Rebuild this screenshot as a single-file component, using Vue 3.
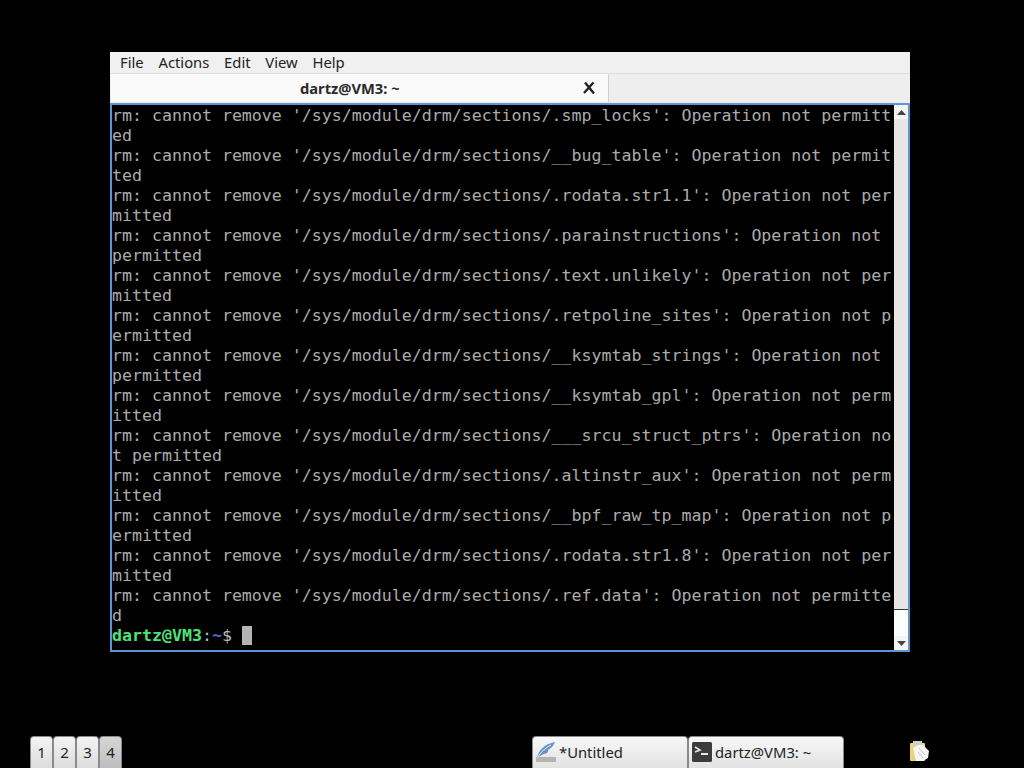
<script setup>
const lines = [
  "rm: cannot remove '/sys/module/drm/sections/.smp_locks': Operation not permitt",
  "ed",
  "rm: cannot remove '/sys/module/drm/sections/__bug_table': Operation not permit",
  "ted",
  "rm: cannot remove '/sys/module/drm/sections/.rodata.str1.1': Operation not per",
  "mitted",
  "rm: cannot remove '/sys/module/drm/sections/.parainstructions': Operation not ",
  "permitted",
  "rm: cannot remove '/sys/module/drm/sections/.text.unlikely': Operation not per",
  "mitted",
  "rm: cannot remove '/sys/module/drm/sections/.retpoline_sites': Operation not p",
  "ermitted",
  "rm: cannot remove '/sys/module/drm/sections/__ksymtab_strings': Operation not ",
  "permitted",
  "rm: cannot remove '/sys/module/drm/sections/__ksymtab_gpl': Operation not perm",
  "itted",
  "rm: cannot remove '/sys/module/drm/sections/___srcu_struct_ptrs': Operation no",
  "t permitted",
  "rm: cannot remove '/sys/module/drm/sections/.altinstr_aux': Operation not perm",
  "itted",
  "rm: cannot remove '/sys/module/drm/sections/__bpf_raw_tp_map': Operation not p",
  "ermitted",
  "rm: cannot remove '/sys/module/drm/sections/.rodata.str1.8': Operation not per",
  "mitted",
  "rm: cannot remove '/sys/module/drm/sections/.ref.data': Operation not permitte",
  "d",
];
const menus = ["File", "Actions", "Edit", "View", "Help"];
const workspaces = ["1", "2", "3", "4"];
</script>

<template>
  <div class="desktop">
    <section class="window">
      <nav class="menubar">
        <span v-for="m in menus" :key="m" class="menu">{{ m }}</span>
      </nav>
      <div class="tabbar">
        <div class="tab">
          <span class="tab-title">dartz@VM3: ~</span>
          <svg class="tab-close" width="14" height="14" viewBox="0 0 14 14">
            <path d="M3 1.5 C6 5 9 9 12 12.5 M11.5 1.5 C9 4 5 9 2 12" stroke="#222" stroke-width="2.4" fill="none" />
          </svg>
        </div>
      </div>
      <div class="terminal">
        <div class="output">
          <div v-for="(l, i) in lines" :key="i" class="line">{{ l }}</div>
          <div class="line prompt"><span class="pu">dartz@VM3</span><span class="pc">:</span><span class="pp">~</span><span class="pc">$ </span><span class="cursor"></span></div>
        </div>
        <div class="scrollbar">
          <div class="sb-btn">
            <svg width="9" height="5" viewBox="0 0 9 5"><path d="M4.5 0 L9 5 L0 5 Z" fill="#444" /></svg>
          </div>
          <div class="sb-thumb"></div>
          <div class="sb-trough"></div>
          <div class="sb-btn">
            <svg width="9" height="5" viewBox="0 0 9 5"><path d="M0 0 L9 0 L4.5 5 Z" fill="#444" /></svg>
          </div>
        </div>
      </div>
    </section>

    <footer class="panel">
      <div class="pager">
        <button v-for="w in workspaces" :key="w" class="ws" :class="{ active: w === '4' }">{{ w }}</button>
      </div>
      <div class="tasks">
        <div class="task">
          <svg class="task-icon" width="20" height="22" viewBox="0 0 20 22">
            <rect x="0" y="16" width="20" height="5" fill="#b4b4b0" />
            <path d="M1 17 C2 10 8 3 19 1 C17 6 14 8 12 9 C13 10 11 13 8 13 C6 14 3 15 1 17 Z" fill="#6d94c4" />
            <path d="M1 17 C5 11 9 7 15 4" stroke="#dfe8f2" stroke-width="1" fill="none" />
          </svg>
          <span>*Untitled</span>
        </div>
        <div class="task">
          <svg class="task-icon" width="20" height="20" viewBox="0 0 20 20">
            <rect width="20" height="20" rx="1.5" fill="#3c3c3c" />
            <path d="M3 5 L8 8 L3 10" stroke="#e8e8e8" stroke-width="1.5" fill="none" />
            <path d="M9 12 H16" stroke="#e8e8e8" stroke-width="2" />
          </svg>
          <span>dartz@VM3: ~</span>
        </div>
      </div>
      <svg class="clip" width="22" height="22" viewBox="0 0 22 22">
        <rect x="1" y="3" width="15" height="18" rx="1" fill="#e6d67a" />
        <rect x="4" y="1" width="9" height="4" fill="#cfd2cc" />
        <path d="M9 5 H14 L20 11 L19 18 L14 21 H7 L4 8 Z" fill="#f6f6f4" />
        <path d="M10 8 L16 15 M9 12 L14 18" stroke="#c8c8c8" stroke-width="1" />
      </svg>
    </footer>
  </div>
</template>

<style>
html, body { margin: 0; background: #000; }
</style>

<style scoped>
.desktop {
  width: 1024px;
  height: 768px;
  background: #000;
  overflow: hidden;
  display: flex;
  flex-direction: column;
  justify-content: space-between;
  font-family: "Noto Sans", "Open Sans", sans-serif;
}
.window {
  width: 800px;
  margin: 52px 0 0 110px;
  background: #f0f0f0;
}
.menubar {
  height: 22px;
  box-sizing: border-box;
  display: flex;
  align-items: center;
  gap: 14.75px;
  padding: 0 0 2px 10px;
  font-size: 14.8px;
  color: #222;
  border-bottom: 1px solid #dcdcdc;
}
.tabbar {
  height: 29px;
  display: flex;
  align-items: flex-start;
  padding-left: 1px;
  background: #eeeeee;
}
.tab {
  width: 498px;
  height: 28px;
  background: #fafafa;
  border-right: 1px solid #cfcfcf;
  border-top: 1px solid #fff;
  display: flex;
  align-items: center;
  justify-content: flex-end;
  padding-bottom: 2px;
  position: relative;
  box-sizing: border-box;
}
.tab-title {
  position: absolute;
  left: 189px;
  font-size: 14.7px;
  font-weight: 700;
  color: #2a2a2a;
}
.tab-close { margin-right: 12px; }
.terminal {
  height: 549px;
  box-sizing: border-box;
  border: 2px solid #5f93d3;
  background: #000;
  display: flex;
  justify-content: space-between;
}
.output {
  width: 782px;
  font-family: "DejaVu Sans Mono", "Liberation Mono", monospace;
  font-size: 16.6px;
  line-height: 20px;
  color: #ababab;
  padding-top: 1px;
}
.line {
  height: 20px;
  white-space: pre;
}
.pu { color: #4fe07a; font-weight: 700; }
.pc { color: #bcbcbc; }
.pp { color: #5f63d8; font-weight: 700; }
.cursor {
  display: inline-block;
  width: 10px;
  height: 19px;
  background: #b4b4b4;
  vertical-align: -4px;
}
.scrollbar {
  width: 14px;
  display: flex;
  flex-direction: column;
  background: #f7f7f7;
}
.sb-btn {
  height: 14px;
  display: flex;
  align-items: center;
  justify-content: center;
  background: #f4f4f4;
}
.sb-thumb {
  height: 491px;
  background: #e6e6e2;
  border-bottom: 1px solid #333;
  box-sizing: border-box;
}
.sb-trough {
  flex: 1;
  background: #fbfdfb;
}
.panel {
  height: 32px;
  display: flex;
  align-items: stretch;
  padding-left: 30px;
}
.pager {
  display: flex;
  width: 92px;
}
.ws {
  width: 23px;
  height: 32px;
  margin: 0;
  padding: 0 0 2px;
  border: 1px solid #8a8a8a;
  border-bottom: 0;
  border-radius: 4px 4px 0 0;
  background: linear-gradient(#f4f4f4, #dcdcdc);
  font-family: inherit;
  font-size: 15px;
  color: #222;
}
.ws.active { background: linear-gradient(#d6d6d6, #bebebe); }
.tasks {
  display: flex;
  margin-left: 410px;
}
.task {
  width: 156px;
  height: 32px;
  box-sizing: border-box;
  padding: 0 0 1px 3px;
  display: flex;
  align-items: center;
  gap: 3px;
  background: linear-gradient(#f8f8f8, #e2e2e2);
  border: 1px solid #8a8a8a;
  border-bottom: 0;
  border-radius: 4px 4px 0 0;
  font-size: 14.8px;
  color: #222;
}
.task-icon { flex: none; }
.clip {
  margin: 4px 0 0 65px;
}
</style>
